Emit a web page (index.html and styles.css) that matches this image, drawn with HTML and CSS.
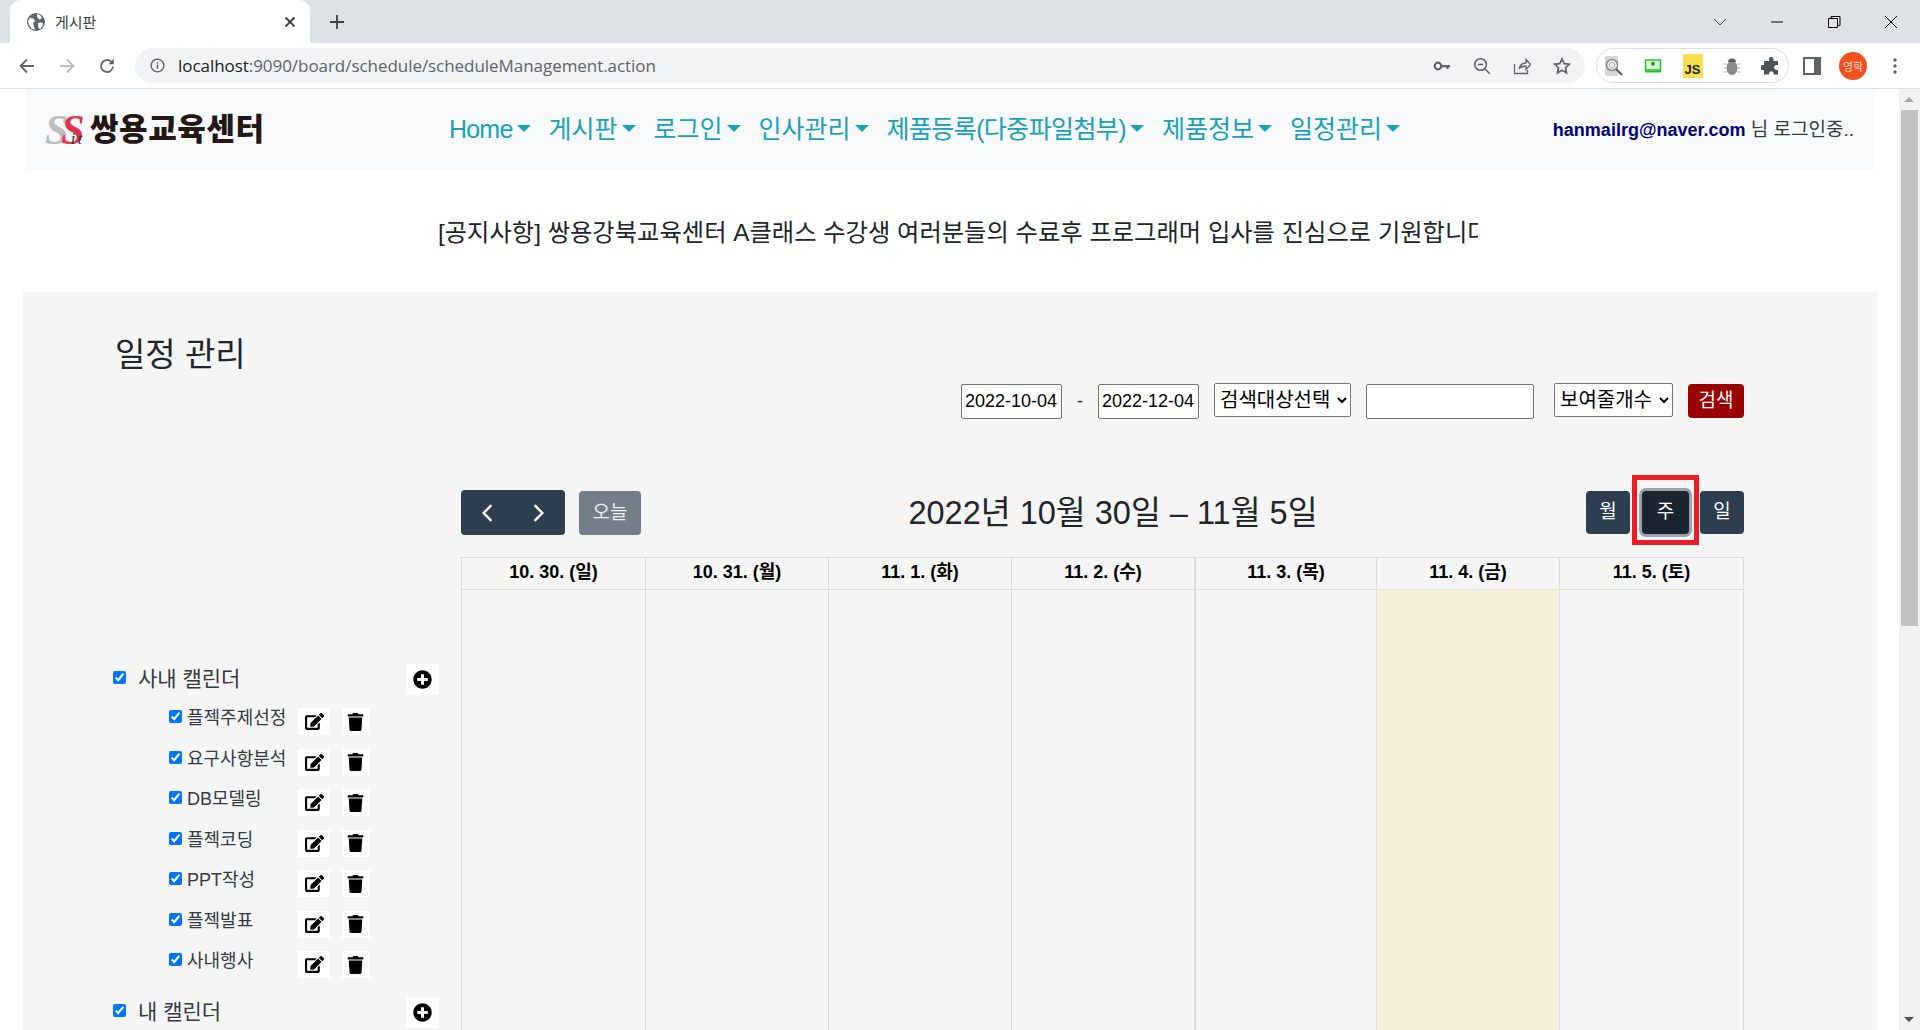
FILE: index.html
```html
<!DOCTYPE html>
<html lang="ko">
<head>
<meta charset="utf-8">
<title>게시판</title>
<link rel="stylesheet" href="styles.css">
</head>
<body>
<svg class="defs" width="0" height="0" aria-hidden="true">
  <symbol id="i-edit" viewBox="0 0 576 512"><path d="M402.6 83.2l90.2 90.2c3.8 3.8 3.8 10 0 13.8L274.4 405.6l-92.8 10.3c-12.4 1.4-22.9-9.1-21.5-21.5l10.3-92.8L388.8 83.2c3.8-3.8 10-3.8 13.8 0zm162-22.9l-48.8-48.8c-15.2-15.2-39.9-15.2-55.2 0l-35.4 35.4c-3.8 3.8-3.8 10 0 13.8l90.2 90.2c3.8 3.8 10 3.8 13.8 0l35.4-35.4c15.2-15.3 15.2-40 0-55.2zM384 346.2V448H64V128h229.8c3.2 0 6.2-1.3 8.5-3.5l40-40c7.6-7.6 2.2-20.5-8.5-20.5H48C21.5 64 0 85.5 0 112v352c0 26.5 21.5 48 48 48h352c26.5 0 48-21.5 48-48V306.2c0-10.7-12.9-16-20.5-8.5l-40 40c-2.2 2.3-3.5 5.3-3.5 8.5z"/></symbol>
  <symbol id="i-trash" viewBox="0 0 448 512"><path d="M432 32H312l-9.4-18.7A24 24 0 0 0 281.1 0H166.8a23.72 23.72 0 0 0-21.4 13.3L136 32H16A16 16 0 0 0 0 48v32a16 16 0 0 0 16 16h416a16 16 0 0 0 16-16V48a16 16 0 0 0-16-16zM53.2 467a48 48 0 0 0 47.9 45h245.8a48 48 0 0 0 47.9-45L416 128H32z"/></symbol>
  <symbol id="i-plus" viewBox="0 0 512 512"><path d="M256 8C119 8 8 119 8 256s111 248 248 248 248-111 248-248S393 8 256 8zm144 276c0 6.6-5.4 12-12 12h-92v92c0 6.6-5.4 12-12 12h-56c-6.6 0-12-5.4-12-12v-92h-92c-6.6 0-12-5.4-12-12v-56c0-6.6 5.4-12 12-12h92v-92c0-6.6 5.4-12 12-12h56c6.6 0 12 5.4 12 12v92h92c6.6 0 12 5.4 12 12v56z"/></symbol>
</svg>

<header class="chrome">
  <div class="tabstrip">
    <div class="tab">
      <svg class="favicon" viewBox="0 0 18 18"><circle cx="9" cy="9" r="9" fill="#5f6368"/><path d="M3 4.500l4 1.500 1 2.500-2 1.500 1 4 1.500 2.500L5 16 2 12 1 8zM10 1l3 1 2 3-2.500 1.500L10 4zM11 10l4.500-.5.5 3-3 3.500-1.500-1z" fill="#fff"/></svg>
      <span class="tab-title">게시판</span>
      <svg class="tab-close" viewBox="0 0 12 12"><path d="M1.500 1.500l9 9m0-9l-9 9" stroke="#3c4043" stroke-width="1.800" fill="none"/></svg>
    </div>
    <svg class="newtab" viewBox="0 0 16 16"><path d="M8 1v14M1 8h14" stroke="#3c4043" stroke-width="1.800" fill="none"/></svg>
    <div class="winctl">
      <svg class="win" viewBox="0 0 16 16"><path d="M2 5l6 6 6-6" stroke="#3c4043" fill="none"/></svg>
      <svg class="win" viewBox="0 0 16 16"><path d="M2 8h12" stroke="#000" fill="none"/></svg>
      <svg class="win" viewBox="0 0 16 16"><path d="M2.500 4.500h9v9h-9zM5 4.500V2.500h9v9h-2.500" stroke="#000" fill="none"/></svg>
      <svg class="win" viewBox="0 0 16 16"><path d="M2 2l12 12M14 2L2 14" stroke="#000" fill="none"/></svg>
    </div>
  </div>
  <div class="toolbar">
    <svg class="tool" viewBox="0 0 18 18"><path d="M16 9H3M9 2.500L2.500 9 9 15.500" stroke="#5f6368" stroke-width="1.800" fill="none"/></svg>
    <svg class="tool" viewBox="0 0 18 18"><path d="M2 9h13M9 2.500L15.500 9 9 15.500" stroke="#b9bcc0" stroke-width="1.800" fill="none"/></svg>
    <svg class="tool" viewBox="0 0 18 18"><path d="M15 9.500A6 6 0 1 1 13.200 4.700" stroke="#5f6368" stroke-width="1.800" fill="none"/><path d="M15.800 1.800v5.400h-5.400z" fill="#5f6368"/></svg>
    <div class="omnibox">
      <svg class="info" viewBox="0 0 16 16"><circle cx="8" cy="8" r="6.800" stroke="#5f6368" stroke-width="1.500" fill="none"/><path d="M8 7v4.500M8 4.500v1.500" stroke="#5f6368" stroke-width="1.600"/></svg>
      <span class="url"><span class="url-host">localhost</span>:9090/board/schedule/scheduleManagement.action</span>
      <div class="omni-actions">
        <svg class="oicon" viewBox="0 0 18 18"><circle cx="5" cy="9" r="3.300" stroke="#5f6368" stroke-width="2.200" fill="none"/><path d="M8 8h9v2.200h-1.500V12h-2v-1.800H8z" fill="#5f6368"/></svg>
        <svg class="oicon" viewBox="0 0 18 18"><circle cx="7.500" cy="7.500" r="5.800" stroke="#5f6368" stroke-width="1.600" fill="none"/><path d="M11.800 11.800l5 5M4.800 7.500h5.400" stroke="#5f6368" stroke-width="1.600"/></svg>
        <svg class="oicon" viewBox="0 0 18 18"><path d="M1.500 7v9.500h13V13M6 12c1-4 4-6 7-6V2.500l4.500 5-4.500 5V9c-3 0-5.500 1-7 3z" stroke="#5f6368" stroke-width="1.300" fill="none"/></svg>
        <svg class="oicon" viewBox="0 0 18 18"><path d="M9 1.800l2.200 4.800 5.100.6-3.800 3.500 1 5.100L9 13.300l-4.500 2.500 1-5.100-3.800-3.500 5.100-.6z" stroke="#5f6368" stroke-width="1.700" fill="none"/></svg>
      </div>
    </div>
    <div class="ext-pill">
      <svg class="ext" viewBox="0 0 20 20"><rect x="1" y="0" width="13" height="20" fill="#d6d6d6"/><circle cx="8" cy="9" r="5.500" stroke="#8a8a8a" stroke-width="1.500" fill="#eee"/><circle cx="8" cy="9" r="2.800" stroke="#aaa" fill="none"/><path d="M12 13l6 6" stroke="#555" stroke-width="2"/></svg>
      <svg class="ext" viewBox="0 0 20 20"><rect x="2.500" y="4" width="15" height="10" fill="#e4fbdc" stroke="#1fc51f" stroke-width="1.500"/><rect x="8.500" y="6" width="3" height="3.500" fill="#158a15"/><path d="M2 15.500h16" stroke="#1fc51f" stroke-width="2"/></svg>
      <span class="js-badge">JS</span>
      <svg class="ext" viewBox="0 0 20 20"><ellipse cx="10" cy="12" rx="5.500" ry="7" fill="#8a8a8a"/><path d="M6 6a4 3.500 0 0 1 8 0z" fill="#5f5f5f"/><path d="M1.500 8h3M1.500 12h3M1.500 16h3M15.500 8h3M15.500 12h3M15.500 16h3" stroke="#aaa" stroke-width="1.200"/></svg>
      <svg class="ext" viewBox="0 0 20 20"><path d="M8 2.500a2.300 2.300 0 0 1 4.500 0V5H17v4h-1.500a2.300 2.300 0 0 0 0 5H17v4.500h-4.500V17a2.300 2.300 0 0 0-4.500 0v1.500H3V14H1.500a2.300 2.300 0 0 1 0-5H3V5h5z" fill="#4f5357"/></svg>
    </div>
    <svg class="panel" viewBox="0 0 18 18"><path d="M0 0h18v18H0z" fill="#5f6368"/><path d="M2 2h9v14H2z" fill="#fff"/></svg>
    <span class="avatar">영학</span>
    <svg class="dots" viewBox="0 0 4 16"><circle cx="2" cy="2" r="1.700"/><circle cx="2" cy="8" r="1.700"/><circle cx="2" cy="14" r="1.700"/></svg>
  </div>
</header>

<div class="viewport">
  <main class="page">
    <nav class="navbar">
      <a class="brand">
        <span class="brand-mark"><span class="s-gray">S</span><span class="s-red">S</span><span class="s-it">it</span></span>
        <span class="brand-name">쌍용교육센터</span>
      </a>
      <ul class="menu">
        <li class="menu-item home">Home</li>
        <li class="menu-item">게시판</li>
        <li class="menu-item">로그인</li>
        <li class="menu-item">인사관리</li>
        <li class="menu-item long">제품등록(다중파일첨부)</li>
        <li class="menu-item">제품정보</li>
        <li class="menu-item">일정관리</li>
      </ul>
      <div class="user"><b class="user-id">hanmailrg@naver.com</b> 님 로그인중..</div>
    </nav>

    <div class="notice"><div class="notice-clip">[공지사항] 쌍용강북교육센터 A클래스 수강생 여러분들의 수료후 프로그래머 입사를 진심으로 기원합니다</div></div>

    <section class="panel-main">
      <h2 class="page-title">일정 관리</h2>
      <form class="search">
        <input class="field date" type="text" value="2022-10-04">
        <span class="dash">-</span>
        <input class="field date" type="text" value="2022-12-04">
        <select class="field sel sel-target"><option>검색대상선택</option></select>
        <input class="field keyword" type="text">
        <select class="field sel sel-count"><option>보여줄개수</option></select>
        <button class="search-btn" type="button">검색</button>
      </form>

      <div class="schedule">
        <aside class="side">
          <div class="cal-group">
            <label class="cal-label"><input type="checkbox" checked>사내 캘린더</label>
            <button class="box-btn add" type="button"><svg class="fa"><use href="#i-plus"/></svg></button>
          </div>
          <ul class="cal-list">
            <li class="cal-row"><label class="sub-label"><input type="checkbox" checked>플젝주제선정</label><button class="box-btn edit" type="button"><svg class="fa"><use href="#i-edit"/></svg></button><button class="box-btn del" type="button"><svg class="fa"><use href="#i-trash"/></svg></button></li>
            <li class="cal-row"><label class="sub-label"><input type="checkbox" checked>요구사항분석</label><button class="box-btn edit" type="button"><svg class="fa"><use href="#i-edit"/></svg></button><button class="box-btn del" type="button"><svg class="fa"><use href="#i-trash"/></svg></button></li>
            <li class="cal-row"><label class="sub-label"><input type="checkbox" checked>DB모델링</label><button class="box-btn edit" type="button"><svg class="fa"><use href="#i-edit"/></svg></button><button class="box-btn del" type="button"><svg class="fa"><use href="#i-trash"/></svg></button></li>
            <li class="cal-row"><label class="sub-label"><input type="checkbox" checked>플젝코딩</label><button class="box-btn edit" type="button"><svg class="fa"><use href="#i-edit"/></svg></button><button class="box-btn del" type="button"><svg class="fa"><use href="#i-trash"/></svg></button></li>
            <li class="cal-row"><label class="sub-label"><input type="checkbox" checked>PPT작성</label><button class="box-btn edit" type="button"><svg class="fa"><use href="#i-edit"/></svg></button><button class="box-btn del" type="button"><svg class="fa"><use href="#i-trash"/></svg></button></li>
            <li class="cal-row"><label class="sub-label"><input type="checkbox" checked>플젝발표</label><button class="box-btn edit" type="button"><svg class="fa"><use href="#i-edit"/></svg></button><button class="box-btn del" type="button"><svg class="fa"><use href="#i-trash"/></svg></button></li>
            <li class="cal-row"><label class="sub-label"><input type="checkbox" checked>사내행사</label><button class="box-btn edit" type="button"><svg class="fa"><use href="#i-edit"/></svg></button><button class="box-btn del" type="button"><svg class="fa"><use href="#i-trash"/></svg></button></li>
          </ul>
          <div class="cal-group">
            <label class="cal-label"><input type="checkbox" checked>내 캘린더</label>
            <button class="box-btn add" type="button"><svg class="fa"><use href="#i-plus"/></svg></button>
          </div>
        </aside>

        <div class="calendar">
          <div class="cal-toolbar">
            <div class="cal-left">
              <div class="pager">
                <button class="pager-btn" type="button"><svg class="chev" viewBox="0 0 12 18"><path d="M10 2L3 9l7 7" stroke="#fff" stroke-width="2.200" fill="none"/></svg></button>
                <button class="pager-btn" type="button"><svg class="chev" viewBox="0 0 12 18"><path d="M2 2l7 7-7 7" stroke="#fff" stroke-width="2.200" fill="none"/></svg></button>
              </div>
              <button class="today" type="button">오늘</button>
            </div>
            <h3 class="cal-title">2022년 10월 30일 – 11월 5일</h3>
            <div class="views">
              <button class="view" type="button">월</button>
              <span class="highlight"><button class="view active" type="button">주</button></span>
              <button class="view" type="button">일</button>
            </div>
          </div>
          <div class="grid">
            <div class="head">10. 30. (일)</div>
            <div class="head">10. 31. (월)</div>
            <div class="head">11. 1. (화)</div>
            <div class="head">11. 2. (수)</div>
            <div class="head thick">11. 3. (목)</div>
            <div class="head">11. 4. (금)</div>
            <div class="head">11. 5. (토)</div>
            <div class="day"></div>
            <div class="day"></div>
            <div class="day"></div>
            <div class="day"></div>
            <div class="day thick"></div>
            <div class="day now"></div>
            <div class="day"></div>
          </div>
        </div>
      </div>
    </section>
  </main>
  <div class="scrollbar">
    <span class="sb-up"></span>
    <span class="sb-thumb"></span>
    <span class="sb-down"></span>
  </div>
</div>
</body>
</html>
```
FILE: styles.css
```css
* { box-sizing: border-box; }
html, body { margin: 0; height: 1030px; overflow: hidden; background: #fff; }
body { font-family: "Liberation Sans", "Noto Sans CJK KR", sans-serif; color: #212529; font-size: 16px; }
.defs { display: block; height: 0; }
ul { list-style: none; margin: 0; padding: 0; }
button { font-family: inherit; }

/* browser chrome */
.chrome { height: 89px; border-bottom: 1px solid #dadce0; }
.tabstrip { height: 43px; background: #dee1e6; display: flex; align-items: center; padding-left: 10px; }
.tab { width: 300px; height: 43px; background: #fff; border-radius: 10px 10px 0 0; display: flex; align-items: center; padding: 0 14px 0 17px; align-self: flex-start; }
.favicon { width: 18px; height: 18px; }
.tab-title { margin-left: 10px; font-size: 15px; color: #3c4043; flex: 1; }
.tab-close { width: 12px; height: 12px; }
.newtab { width: 16px; height: 16px; margin-left: 19px; }
.winctl { margin-left: auto; display: flex; align-items: center; gap: 41px; padding-right: 21px; }
.win { width: 16px; height: 16px; }
.toolbar { height: 45px; display: flex; align-items: center; padding-left: 18px; background: #fff; }
.tool { width: 18px; height: 18px; margin-right: 22px; }
.omnibox { width: 1450px; height: 35px; margin-left: -3px; background: #f1f3f4; border-radius: 18px; display: flex; align-items: center; padding: 0 14px 0 15px; }
.info { width: 15px; height: 15px; }
.url { margin-left: 13px; font-family: "Open Sans", sans-serif; font-size: 17px; letter-spacing: -.05px; color: #5f6368; white-space: nowrap; }
.url-host { color: #202124; }
.omni-actions { margin-left: auto; display: flex; gap: 22px; }
.oicon { width: 18px; height: 18px; }
.ext-pill { width: 193px; height: 35px; margin-left: 11px; border: 1px solid #dadce0; border-radius: 18px; display: flex; align-items: center; justify-content: space-between; padding: 0 7px; }
.ext { width: 20px; height: 20px; }
.js-badge { width: 20px; height: 24px; background: #f7df4e; font-size: 13px; font-weight: 700; color: #222; display: flex; align-items: flex-end; justify-content: center; line-height: 16px; }
.panel { width: 18px; height: 18px; margin-left: 14px; }
.avatar { width: 28px; height: 28px; margin-left: 18px; border-radius: 50%; background: #f4511e; color: #ffd9cc; font-size: 11px; display: flex; align-items: center; justify-content: center; }
.dots { width: 4px; height: 16px; margin-left: 26px; fill: #5f6368; }

/* page */
.viewport { display: flex; height: 941px; }
.page { width: 1899px; height: 941px; overflow: hidden; flex: none; }
.scrollbar { width: 21px; flex: none; background: #f1f1f1; display: flex; flex-direction: column; align-items: center; }
.sb-up { width: 100%; height: 21px; display: block; position: relative; }
.sb-up::after { content: ""; position: absolute; left: 5px; top: 8px; border: 5px solid transparent; border-top: 0; border-bottom: 5px solid #a3a3a3; }
.sb-thumb { width: 17px; height: 516px; background: #c1c1c1; display: block; }
.sb-down { margin-top: auto; width: 100%; height: 20px; display: block; position: relative; }
.sb-down::after { content: ""; position: absolute; left: 5px; top: 7px; border: 5px solid transparent; border-bottom: 0; border-top: 5px solid #505050; }

/* navbar */
.navbar { margin-left: 27px; width: 1846px; height: 81px; background: #f8f9fa; display: flex; align-items: center; padding-right: 19px; }
.brand { width: 422px; padding-left: 18px; display: flex; align-items: center; }
.brand-mark { display: block; flex: none; width: 45px; height: 40px; line-height: 40px; font-family: "Liberation Serif", serif; font-style: italic; white-space: nowrap; font-weight: 700; font-size: 42px; }
.s-gray { color: #bdbdbd; letter-spacing: -7px; }
.s-red { color: #e2304f; letter-spacing: -14px; }
.s-it { font-size: 17px; color: #333; font-weight: 400; letter-spacing: 2px; }
.brand-name { font-size: 31px; font-weight: 900; color: #231815; letter-spacing: .6px; line-height: 1; }
.menu { display: flex; gap: 18px; flex: 1; margin-top: -2px; }
.menu-item { font-size: 25px; color: #17a2b8; white-space: nowrap; display: flex; align-items: center; line-height: 36px; }
.menu-item::after { content: ""; margin-left: 4px; border-top: 7px solid #17a2b8; border-left: 7px solid transparent; border-right: 7px solid transparent; }
.home { letter-spacing: -.8px; }
.long { letter-spacing: -.6px; }
.user { font-size: 19px; white-space: nowrap; color: #343a40; margin-top: -4px; }
.user-id { color: #000080; font-size: 18px; }

.notice { height: 122px; padding-left: 438px; padding-bottom: 2px; display: flex; align-items: center; }
.notice-clip { width: 1040px; overflow: hidden; white-space: nowrap; font-size: 24.3px; color: #212529; }

.panel-main { margin-left: 23px; width: 1854px; min-height: 800px; background: #f5f5f5; padding: 36px 133px 0 90px; }
.page-title { margin: 0; font-size: 33px; font-weight: 400; line-height: 54px; padding-left: 2px; }
.search { display: flex; justify-content: flex-end; align-items: center; margin-top: 1px; height: 36px; font-size: 16px; }
.field { height: 35px; border: 1px solid #767676; border-radius: 2px; background: #fff; font-family: inherit; font-size: 18px; color: #000; padding: 0 3px; }
.date { width: 101px; }
.dash { width: 36px; text-align: center; font-size: 18px; }
.sel { height: 34px; font-size: 20px; padding: 0 1px; margin-top: -2px; }
.sel-target { width: 137px; margin-left: 15px; }
.keyword { width: 168px; margin-left: 15px; }
.sel-count { width: 119px; margin-left: 20px; }
.search-btn { width: 56px; height: 34px; margin-left: 15px; background: #990000; color: #fff; border: 0; border-radius: 4px; font-size: 19px; padding: 0 0 6px; }

.schedule { display: flex; margin-top: 71px; }
.side { width: 348px; padding-top: 175px; flex: none; }
.cal-group { display: flex; justify-content: space-between; align-items: flex-start; width: 326px; }
.cal-label { display: flex; align-items: center; font-size: 21px; height: 24px; color: #343a40; white-space: nowrap; }
.cal-label input { margin: 1px 12px 0 0; width: 13px; height: 13px; flex: none; }
.cal-group + .cal-list { margin-top: 15px; }
.cal-list { padding-left: 56px; margin-bottom: 4px; }
.cal-row { height: 40.5px; display: flex; align-items: flex-start; }
.sub-label { width: 129px; display: flex; align-items: flex-start; font-size: 18px; line-height: 16px; color: #343a40; white-space: nowrap; }
.sub-label input { margin: 0 5px 0 0; width: 13px; height: 13px; flex: none; }
.box-btn { background: #fff; border: 0; padding: 0; display: flex; align-items: center; justify-content: center; }
.add { width: 33px; height: 31px; margin-top: -1px; }
.edit { width: 32px; height: 27px; margin-top: -2px; }
.del { width: 28px; height: 27px; margin: -2px 0 0 12px; }
.fa { width: 19px; height: 19px; fill: #000; }
.del .fa { height: 18px; margin-right: 1px; }

.calendar { width: 1283px; flex: none; }
.cal-toolbar { display: flex; justify-content: space-between; align-items: flex-start; height: 67px; }
.cal-left { display: flex; gap: 14px; width: 179px; flex: none; }
.pager { display: flex; flex: none; width: 104px; height: 45px; background: #2c3e50; border-radius: 4px; }
.pager-btn { flex: 1; background: none; border: 0; display: flex; align-items: center; justify-content: center; padding: 0; }
.chev { width: 14px; height: 20px; }
.today { flex: none; width: 62px; height: 44px; margin-top: 1px; background: #737e8a; color: #eee; border: 0; border-radius: 4px; font-size: 19px; padding: 0 0 6px; }
.cal-title { margin: 0; font-size: 32.5px; font-weight: 400; line-height: 46px; white-space: nowrap; color: #212529; }
.views { display: flex; align-items: flex-start; width: 158px; justify-content: flex-end; margin-top: 1px; }
.view { width: 44px; height: 43px; background: #2c3e50; color: #fff; border: 0; border-radius: 4px; font-size: 19px; padding: 0 0 6px; }
.highlight { display: block; margin: -16px 1px 0 2px; width: 67px; height: 70px; border: 5px solid #ed1c24; padding: 11px 0 0 5px; }
.active { width: 47px; background: #1a252f; box-shadow: 0 0 0 3px #9aa3ab; margin: 0; }

.grid { display: grid; grid-template-columns: 184px 183px 183px 183px 182px 183px 1fr; grid-template-rows: 32px 600px; border-top: 1px solid #ddd; border-right: 1px solid #ddd; }
.head { border-left: 1px solid #ddd; border-bottom: 1px solid #ddd; font-size: 18px; font-weight: 700; color: #000; text-align: center; line-height: 29px; }
.day { border-left: 1px solid #ddd; }
.thick { border-left-width: 2px; }
.now { background: #f5efd9; }
```
